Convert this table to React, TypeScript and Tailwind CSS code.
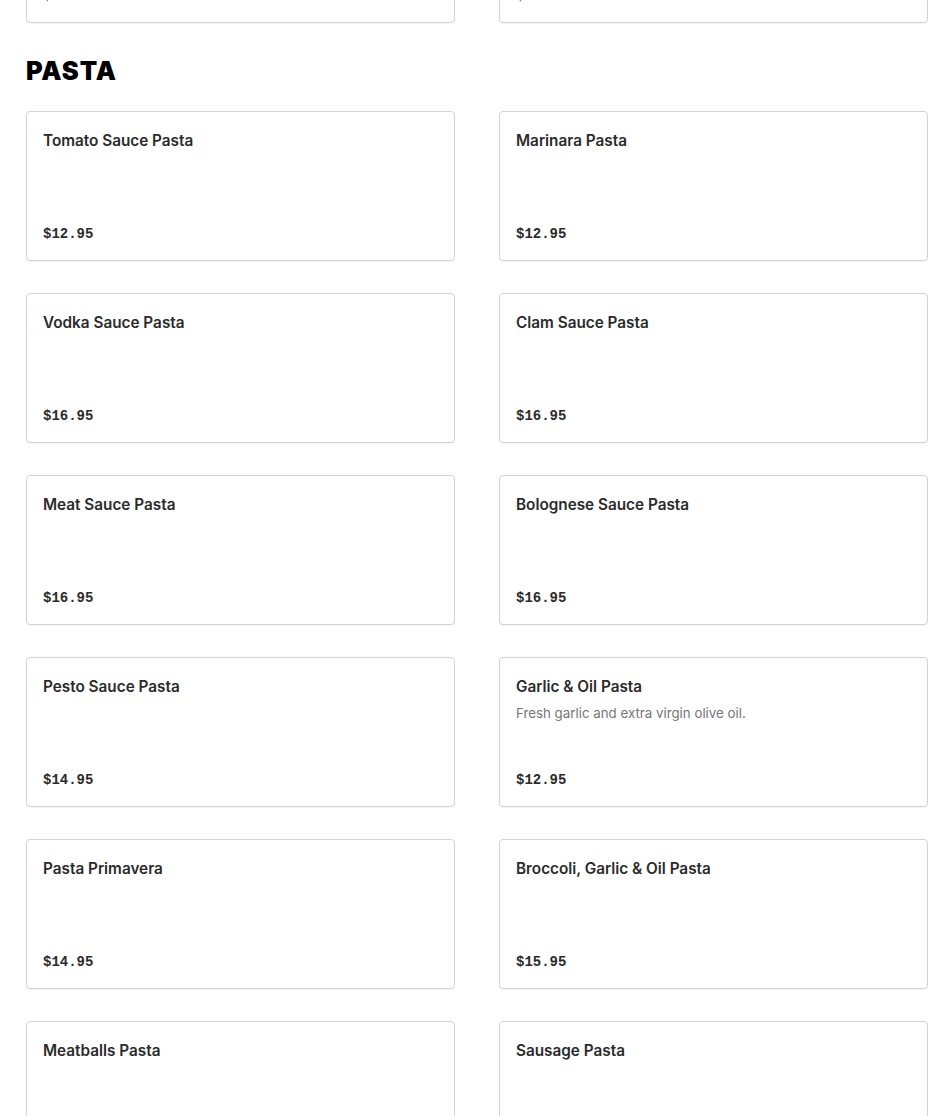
const items = [
  { name: 'Tomato Sauce Pasta', price: '$12.95' },
  { name: 'Marinara Pasta', price: '$12.95' },
  { name: 'Vodka Sauce Pasta', price: '$16.95' },
  { name: 'Clam Sauce Pasta', price: '$16.95' },
  { name: 'Meat Sauce Pasta', price: '$16.95' },
  { name: 'Bolognese Sauce Pasta', price: '$16.95' },
  { name: 'Pesto Sauce Pasta', price: '$14.95' },
  { name: 'Garlic & Oil Pasta', desc: 'Fresh garlic and extra virgin olive oil.', price: '$12.95' },
  { name: 'Pasta Primavera', price: '$14.95' },
  { name: 'Broccoli, Garlic & Oil Pasta', price: '$15.95' },
  { name: 'Meatballs Pasta', price: '$14.95' },
  { name: 'Sausage Pasta', price: '$14.95' },
];

type Item = { name?: string; desc?: string; price: string };

const Card = ({ item }: { item: Item }) => (
  <div className="h-[150px] flex flex-col justify-between px-4 pt-[17px] pb-4 border border-[#d3d3d3] rounded bg-white shadow-[0_1px_0_rgba(0,0,0,0.04)]">
    <div>
      {item.name && (
        <h3 className="text-[15.3px] leading-6 font-semibold text-[#2b2b2b] font-['Inter',sans-serif]">{item.name}</h3>
      )}
      {item.desc && (
        <p className="mt-[4px] text-[13.3px] leading-5 text-[#767676] font-['Inter',sans-serif]">{item.desc}</p>
      )}
    </div>
    <span className="text-[14px] leading-5 font-bold text-[#2b2b2b] font-['Liberation_Mono',monospace]">{item.price}</span>
  </div>
);

export default function App() {
  return (
    <div className="h-[1116px] overflow-hidden bg-white pl-[26px] pr-[22px]">
      {/* tail of the previous section, scrolled out of view */}
      <div className="grid grid-cols-2 gap-x-[44px] -mt-[127px]">
        <Card item={{ price: '$5.95' }} />
        <Card item={{ price: '$5.95' }} />
      </div>

      <h2 className="mt-8 mb-6 text-[25.5px] leading-8 font-black tracking-[0.9px] text-black font-['Inter',sans-serif]">
        PASTA
      </h2>

      <div className="grid grid-cols-2 gap-x-[44px] gap-y-8">
        {items.map((item) => (
          <Card key={item.name} item={item} />
        ))}
      </div>
    </div>
  );
}
